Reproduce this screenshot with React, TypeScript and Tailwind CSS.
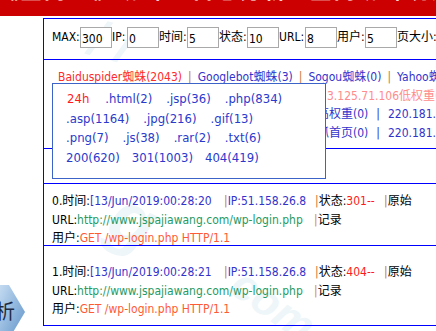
import React from "react";

const sep = "text-[#cc7733]";

function Field({ label, value, lw }: { label: string; value: string; lw: string }) {
  return (
    <>
      <span className={`${lw} shrink-0 leading-[21px]`}>{label}</span>
      <input
        readOnly
        value={value}
        className="h-[21px] w-[32px] shrink-0 border border-[#a9a9a9] bg-white px-[1px] pt-[2px] text-[12px] leading-[17px] text-black outline-none"
      />
    </>
  );
}

function Popup() {
  return (
    <div className="absolute left-[8px] top-[23px] z-10 h-[96px] w-[274px] border border-[#3c64c8] bg-white pl-[13px] pt-[5px] text-[13px] leading-[19.5px] text-[#2a3acc]">
      <div className="flex gap-[14px] whitespace-nowrap pl-[1px]">
        <span className="text-[#ff1a1a]">24h</span>
        <span className="ml-[2px]">.html(2)</span>
        <span>.jsp(36)</span>
        <span>.php(834)</span>
      </div>
      <div className="flex gap-[14px] whitespace-nowrap">
        <span>.asp(1164)</span>
        <span>.jpg(216)</span>
        <span>.gif(13)</span>
      </div>
      <div className="flex gap-[14px] whitespace-nowrap">
        <span>.png(7)</span>
        <span>.js(38)</span>
        <span>.rar(2)</span>
        <span>.txt(6)</span>
      </div>
      <div className="flex gap-[12px] whitespace-nowrap">
        <span>200(620)</span>
        <span>301(1003)</span>
        <span>404(419)</span>
      </div>
    </div>
  );
}

function HiddenRow({ prefix, w, children, color }: { prefix: string; w: string; children: React.ReactNode; color: string }) {
  return (
    <div className={`flex whitespace-nowrap ${color}`}>
      <div className={`flex ${w} shrink-0 justify-end overflow-hidden`}>
        <span className="shrink-0">{prefix}</span>
      </div>
      <span>{children}</span>
    </div>
  );
}

function Record({ n, time, status, pt, h }: { n: number; time: string; status: string; pt: string; h: string }) {
  return (
    <div className={`${h} ${pt} border-b border-[#0000ff] pl-[8px] leading-[18.5px] whitespace-nowrap`}>
      <div className="flex">
        <span className="inline-block w-[172px] shrink-0">
          {n}.时间:<span className="text-[#3333cc]">[{time}</span>
        </span>
        <span className="inline-block w-[91px] shrink-0">
          <span className={sep}>|</span>
          <span className="text-[#3333cc]">IP:51.158.26.8</span>
        </span>
        <span className="inline-block w-[69px] shrink-0">
          <span className={sep}>|</span>状态:<span className="text-[#ff1a1a]">{status}--</span>
        </span>
        <span>
          <span className={sep}>|</span>原始
        </span>
      </div>
      <div className="flex">
        <span className="inline-block w-[262px] shrink-0">
          URL:<span className="text-[#259a63]">http://www.jspajiawang.com/wp-login.php</span>
        </span>
        <span>
          <span className="text-[#e08a1a]">|</span>记录
        </span>
      </div>
      <div>
        用户:<span className="text-[#ff5a36]">GET /wp-login.php HTTP/1.1</span>
      </div>
    </div>
  );
}

export default function App() {
  return (
    <div className="relative h-[331px] w-[436px] overflow-hidden bg-white font-['DejaVu_Sans_Condensed','Liberation_Sans','Noto_Sans_CJK_SC',sans-serif] text-[12px] text-black">
      {/* faint watermark */}
      <div className="pointer-events-none absolute left-[112px] top-[180px] rotate-[25deg] whitespace-nowrap font-['Liberation_Sans',sans-serif] text-[72px] font-bold italic leading-[80px] text-[#eef6f9]">
        g
      </div>
      <div className="pointer-events-none absolute left-[228px] top-[280px] rotate-[35deg] whitespace-nowrap font-['Liberation_Sans',sans-serif] text-[44px] font-bold italic leading-[50px] text-[#eef6f9]">
        com
      </div>
      <div className="pointer-events-none absolute left-[90px] top-[14px] rotate-[15deg] whitespace-nowrap font-['Liberation_Sans',sans-serif] text-[50px] font-bold italic leading-[56px] text-[#eef6f9]">
        / /
      </div>

      <header className="relative h-[16px] overflow-hidden bg-[#cc0000]">
        <div className="-ml-[4px] -mt-[23px] whitespace-nowrap font-['Noto_Sans_CJK_SC',sans-serif] text-[22px] font-bold leading-[22px] tracking-[2px] text-white">
          《全网IP》蜘蛛IP日志分析—全网蜘蛛统计分析工具
        </div>
      </header>

      <div className="relative mt-[2px] flex">
        <aside className="w-[43px] shrink-0" />
        <main className="relative w-[620px] shrink-0 border-l border-t border-[#0000ff]">
          {/* filter row */}
          <div className="flex h-[41px] items-start border-b border-[#0000ff] pl-[8px] pt-[8px] whitespace-nowrap">
            <Field label="MAX:" value="300" lw="w-[28px]" />
            <Field label="IP:" value="0" lw="w-[15px]" />
            <Field label="时间:" value="5" lw="w-[28px]" />
            <Field label="状态:" value="10" lw="w-[28px]" />
            <Field label="URL:" value="8" lw="w-[26px]" />
            <Field label="用户:" value="5" lw="w-[28px]" />
            <span className="leading-[21px]">页大小:</span>
          </div>

          {/* spider section */}
          <div className="relative h-[89px] border-b border-[#0000ff] pt-[8px] leading-[18.5px] text-[#3333cc]">
            <div className="flex whitespace-nowrap pl-[14px]">
              <span className="text-[#ff2a2a]">Baiduspider蜘蛛(2043)</span>
              <span className={`mx-[6px] ${sep}`}>|</span>
              <span>Googlebot蜘蛛(3)</span>
              <span className={`mx-[6px] ${sep}`}>|</span>
              <span>Sogou蜘蛛(0)</span>
              <span className={`mx-[6px] ${sep}`}>|</span>
              <span>Yahoo蜘蛛(0)</span>
            </div>
            <HiddenRow prefix="Baiduspider: 220.181.108.119 | 12" w="w-[283px]" color="text-[#ff8c8c]">
              3.125.71.106低权重(0) | 220.181.108.91低权重(0)
            </HiddenRow>
            <HiddenRow prefix="Baiduspider: 220.181.108.95 | 123.125.71.95高" w="w-[285px]" color="text-[#3333cc]">
              权重(0)<span className="mx-[8px]">|</span>220.181.108.77高权重(0)
            </HiddenRow>
            <HiddenRow prefix="Baiduspider: 220.181.108.94 | 123.125.71.94抓" w="w-[285px]" color="text-[#3333cc]">
              首页(0)<span className="mx-[8px]">|</span>220.181.108.82抓首页(0)
            </HiddenRow>
            <Popup />
          </div>

          <div className="h-[35px] border-b border-[#0000ff]" />

          <Record n={0} time="13/Jun/2019:00:28:20" status="301" pt="pt-[8px]" h="h-[62px]" />
          <Record n={1} time="13/Jun/2019:00:28:21" status="404" pt="pt-[17px]" h="h-[80px]" />
        </main>
      </div>

      {/* side arrow button */}
      <div className="absolute left-0 top-[285px] h-[54px] w-[26px]">
        <svg width="26" height="54" viewBox="0 0 26 54" className="absolute left-0 top-0">
          <defs>
            <linearGradient id="ag" x1="0" y1="0" x2="1" y2="1">
              <stop offset="0" stopColor="#c4dbf1" />
              <stop offset="1" stopColor="#5e93c9" />
            </linearGradient>
          </defs>
          <polygon points="0,0 9,0 25,27 9,54 0,54" fill="url(#ag)" />
        </svg>
        <span className="absolute -left-[5px] top-[15px] font-['Noto_Sans_CJK_SC',sans-serif] text-[20px] leading-[22px] text-[#1e2a44]">
          析
        </span>
      </div>
    </div>
  );
}
